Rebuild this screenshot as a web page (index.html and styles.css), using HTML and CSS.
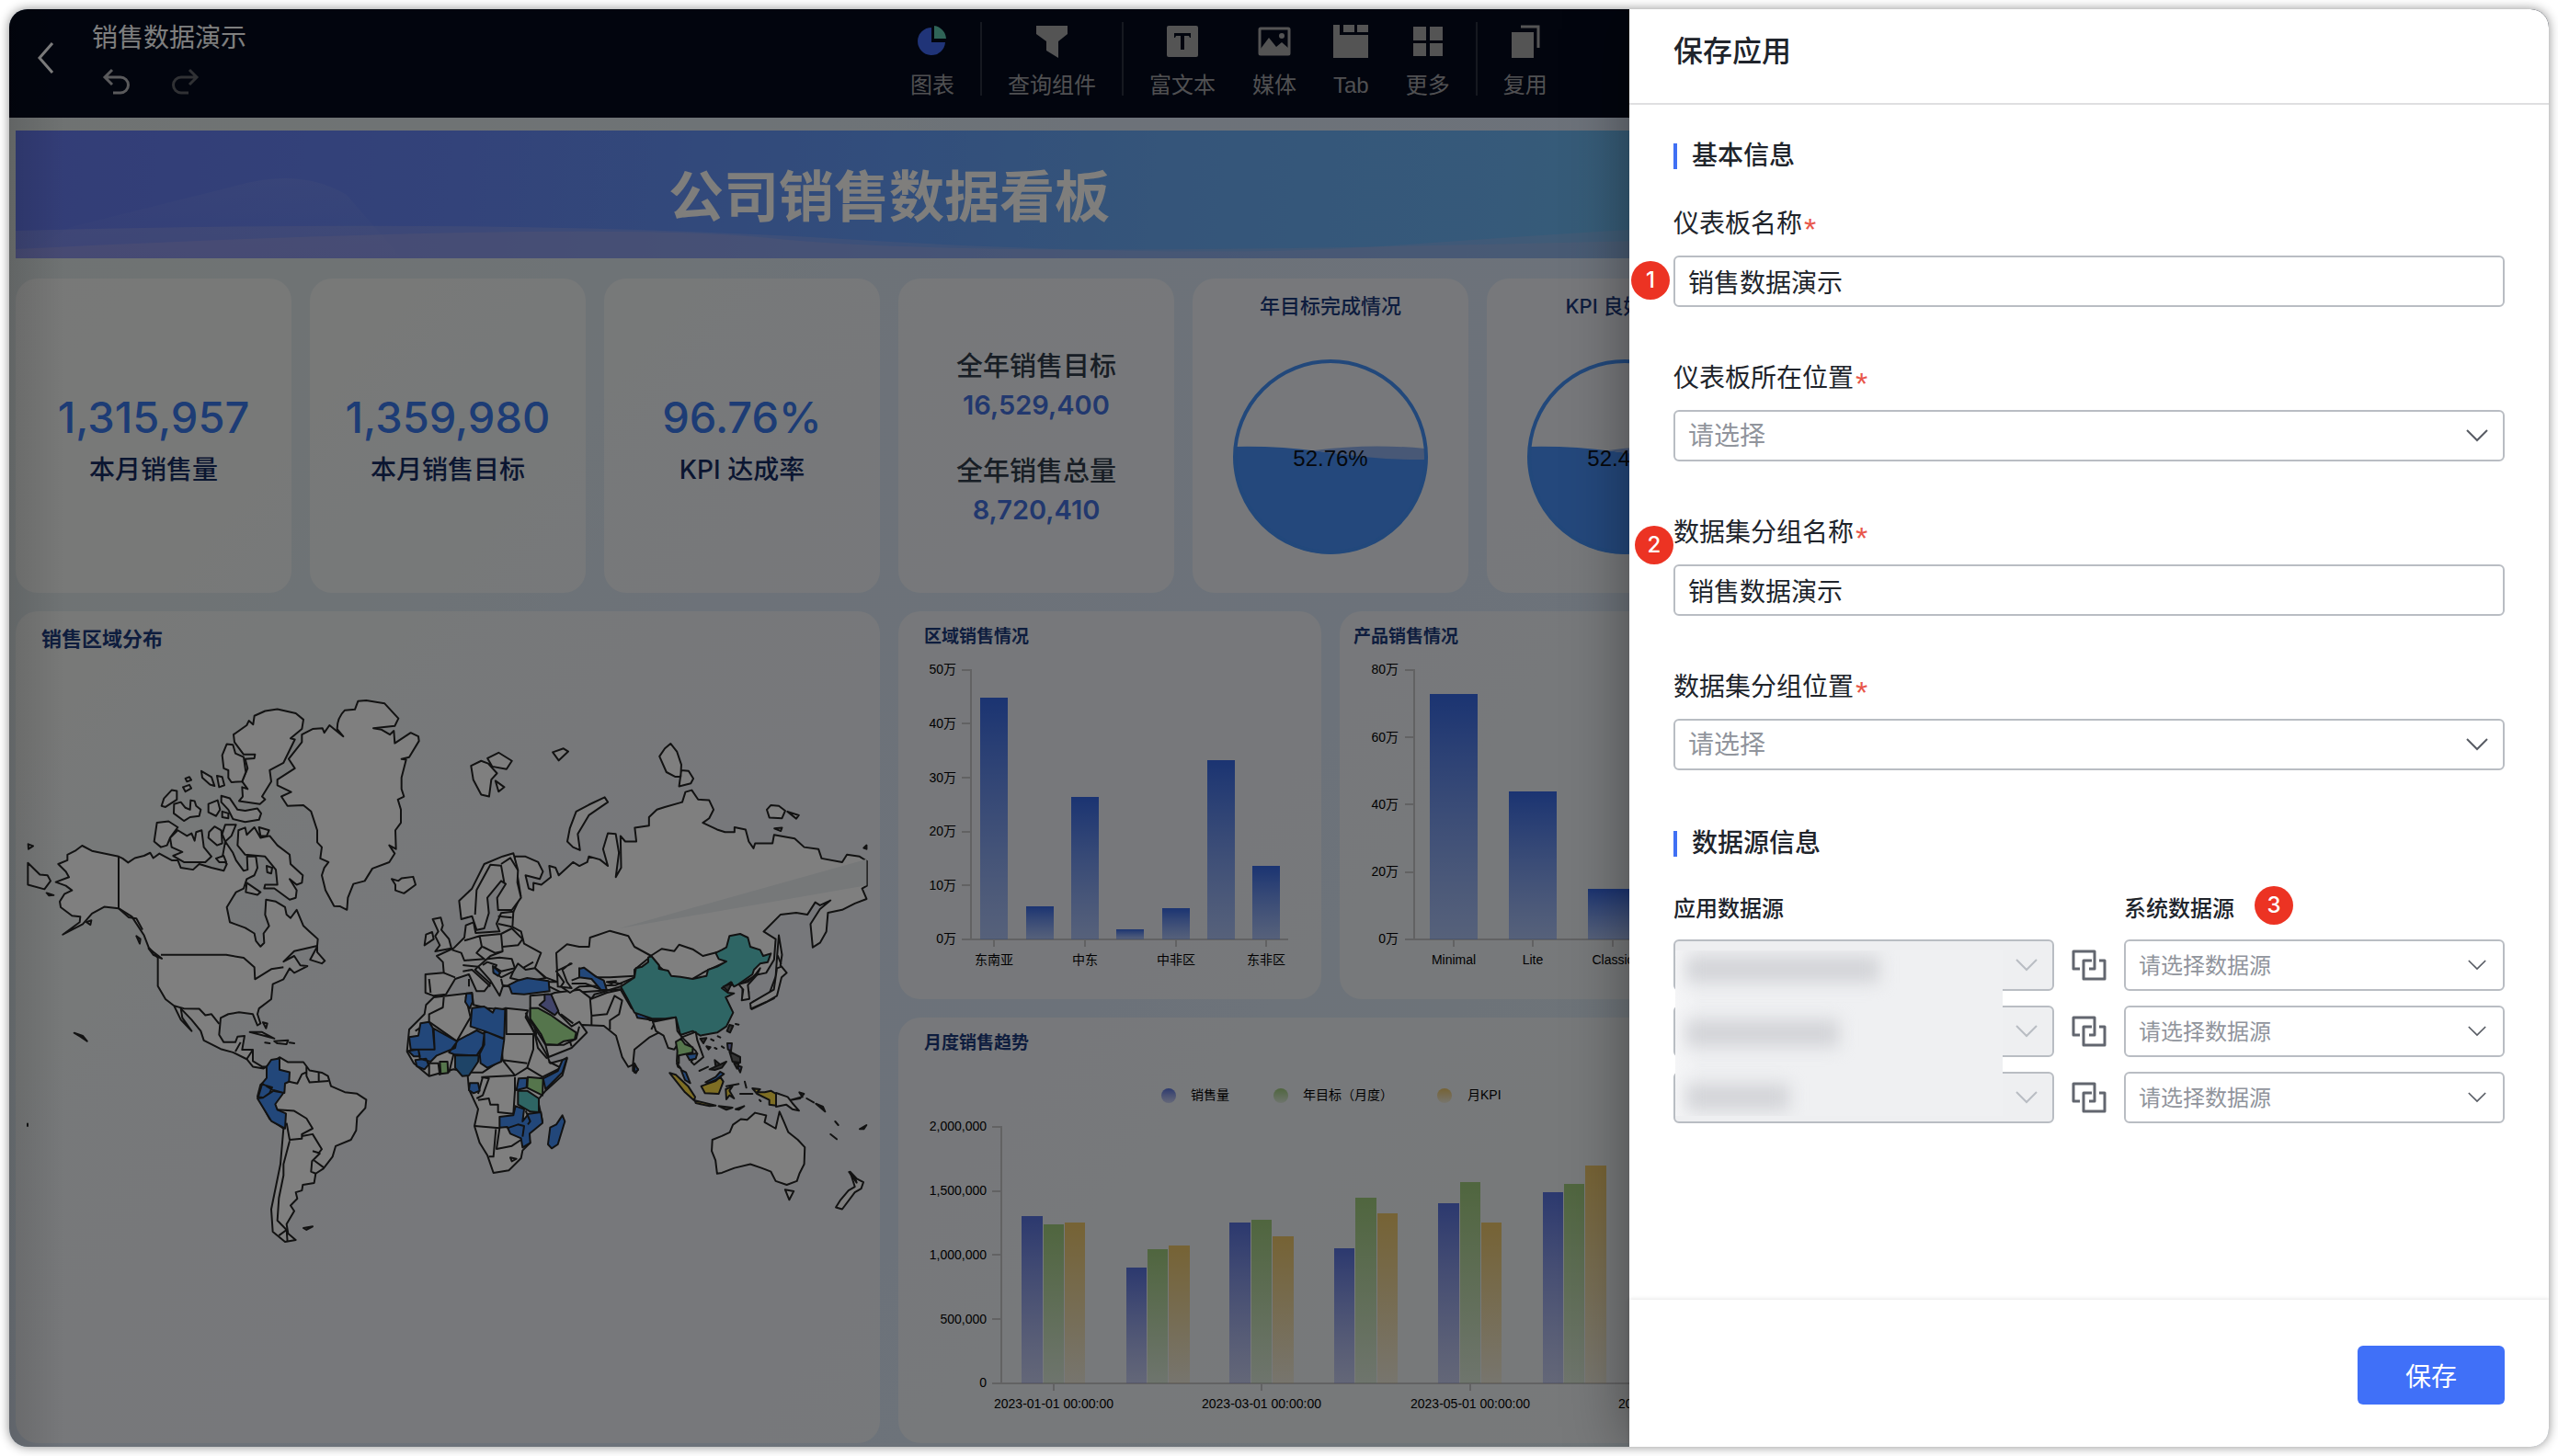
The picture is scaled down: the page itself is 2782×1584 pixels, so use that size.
FILE: index.html
```html
<!DOCTYPE html>
<html lang="zh-CN">
<head>
<meta charset="utf-8">
<meta name="viewport" content="width=device-width, initial-scale=1">
<title>销售数据演示</title>
<link rel="stylesheet" href="styles.css">
</head>
<body>
<div class="app">
  <header class="topbar">
    <div class="topbar-left">
      <button class="icon-btn" aria-label="返回"><svg width="20" height="36" viewBox="0 0 20 36"><path d="M17 2 3 18l14 16" fill="none" stroke="#fff" stroke-width="3"/></svg></button>
      <div class="doc">
        <h1 class="doc-title">销售数据演示</h1>
        <div class="history">
          <button class="icon-btn" aria-label="撤销"><svg width="32" height="30" viewBox="0 0 32 30"><path d="M11 2 3 10l8 8M4 10h16a8 8 0 0 1 0 17h-8" fill="none" stroke="#b4b4b8" stroke-width="3"/></svg></button>
          <button class="icon-btn" aria-label="重做"><svg width="32" height="30" viewBox="0 0 32 30"><path d="m21 2 8 8-8 8M28 10H12a8 8 0 0 0 0 17h8" fill="none" stroke="#606268" stroke-width="3"/></svg></button>
        </div>
      </div>
    </div>
    <nav class="tools">
      <button class="tool"><svg width="36" height="36" viewBox="0 0 36 36"><path d="M17 3a15 15 0 1 0 15 16H17z" fill="#4068f0"/><path d="M20 1a15 15 0 0 1 13 14H20z" fill="#5fc8ae"/></svg>图表</button>
      <span class="sep"></span>
      <button class="tool"><svg width="36" height="36" viewBox="0 0 36 36"><path d="M1 1h34v9l-10 8v18l-13-8V18L1 10z" fill="#a8a8a8"/></svg>查询组件</button>
      <span class="sep"></span>
      <div class="tool-group">
        <button class="tool"><svg width="36" height="36" viewBox="0 0 36 36"><rect x="1" y="1" width="34" height="34" rx="2" fill="#a8a8a8"/><path d="M9 9h18v5h-1l-1-2h-5v15h-4V12h-5l-1 2H9z" fill="#040b1d"/></svg>富文本</button>
        <button class="tool"><svg width="36" height="36" viewBox="0 0 36 36"><rect x="2" y="4" width="32" height="28" rx="1" fill="none" stroke="#a8a8a8" stroke-width="3"/><path d="M3 26 12 14l8 10 6-5 8 7v6H3z" fill="#a8a8a8"/><circle cx="26" cy="12" r="3" fill="#a8a8a8"/></svg>媒体</button>
        <button class="tool"><svg width="38" height="36" viewBox="0 0 38 36"><path d="M0 0h7v11h31v25H0zM11 0h12v8H11zM26 0h12v8H26z" fill="#a8a8a8"/></svg>Tab</button>
        <button class="tool"><svg width="36" height="36" viewBox="0 0 36 36"><path d="M2 2h14v15H2zM20 2h14v15H20zM2 20h14v14H2zM20 20h14v14H20z" fill="#a8a8a8"/></svg>更多</button>
      </div>
      <span class="sep"></span>
      <button class="tool"><svg width="36" height="36" viewBox="0 0 36 36"><path d="M3 8h24v28H3z" fill="#a8a8a8"/><path d="M13 2h19v23" fill="none" stroke="#a8a8a8" stroke-width="3"/></svg>复用</button>
    </nav>
  </header>

  <main class="board">
    <div class="banner">
      <svg class="banner-art" viewBox="0 0 1900 139" preserveAspectRatio="none" aria-hidden="true">
        <defs><linearGradient id="glow" x1="0" y1="0" x2="0" y2="1"><stop offset="0" stop-color="#b0b8f0" stop-opacity=".14"/><stop offset="1" stop-color="#b0b8f0" stop-opacity="0"/></linearGradient></defs>
        <path d="M60 105 240 60Q310 40 360 70L420 139H0z" fill="url(#glow)"/>
        <path d="M0 109Q520 95 900 118T1500 125T1900 100V139H0z" fill="#b8b4e4" opacity=".26"/>
        <path d="M0 129Q640 98 820 117T1500 126T1900 112V139H0z" fill="#c8b4d8" opacity=".24"/>
      </svg>
      <h2 class="banner-title">公司销售数据看板</h2>
    </div>

    <section class="kpis">
      <div class="card kpi"><strong>1,315,957</strong><span>本月销售量</span></div>
      <div class="card kpi"><strong>1,359,980</strong><span>本月销售目标</span></div>
      <div class="card kpi"><strong>96.76%</strong><span>KPI 达成率</span></div>
      <div class="card totals">
        <div class="total"><span>全年销售目标</span><strong>16,529,400</strong></div>
        <div class="total"><span>全年销售总量</span><strong>8,720,410</strong></div>
      </div>
      <div class="card gauge">
        <h3 class="card-title">年目标完成情况</h3>
        <svg width="216" height="216" viewBox="0 0 216 216">
          <path d="M4 97Q50 96 96 102T212 111A104 104 0 0 1 4 108z" fill="#4890f8"/>
          <path d="M90 101Q150 93 211 99V111Q160 112 90 101z" fill="#90b0ec"/>
          <circle cx="108" cy="108" r="104" fill="none" stroke="#4490f6" stroke-width="4"/>
          <text class="gauge-text" x="108" y="109">52.76%</text>
        </svg>
      </div>
      <div class="card gauge">
        <h3 class="card-title">KPI 良好情况</h3>
        <svg width="216" height="216" viewBox="0 0 216 216">
          <path d="M4 97Q50 96 96 102T212 111A104 104 0 0 1 4 108z" fill="#4890f8"/>
          <path d="M90 101Q150 93 211 99V111Q160 112 90 101z" fill="#90b0ec"/>
          <circle cx="108" cy="108" r="104" fill="none" stroke="#4490f6" stroke-width="4"/>
          <text class="gauge-text" x="108" y="109">52.43%</text>
        </svg>
      </div>
    </section>

    <section class="charts">
      <article class="card map-card">
        <h3 class="card-title">销售区域分布</h3>
        <svg class="chart map" viewBox="17 740 940 640" role="img" aria-label="销售区域分布">
          <!-- Americas, Greenland -->
          <g transform="translate(0 740) scale(.33333 .40816)">
            <path d="M190 490 220 480 220 465 245 455 268 441 300 455 387 470 400 475 418 486 440 474 470 468 490 460 500 474 520 462 560 480 580 480 590 500 630 505 650 490 690 500 730 508 740 490 725 475 735 430 760 460 770 480 795 508 808 505 806 470 835 470 840 500 830 520 805 530 795 555 770 565 740 605 750 645 800 660 830 675 835 695 850 710 862 700 860 675 878 655 865 625 868 585 900 590 930 605 935 625 948 634 968 612 990 655 1010 670 1037 690 1035 708 960 722 925 750 960 735 980 760 1003 762 960 780 945 768 925 797 890 810 885 850 845 875 840 890 850 915 840 920 825 890 780 885 745 890 720 900 715 945 730 965 768 965 775 950 798 948 790 985 825 985 825 1015 855 1030 870 1030 860 1035 825 1030 805 1010 760 992 720 983 665 960 655 935 625 905 590 875 595 900 625 935 590 905 568 868 540 850 515 815 515 740 485 712 470 680 430 630 387 608 340 604 300 622 270 650 205 678 260 645 262 630 235 628 198 605 195 590 210 570 235 560 215 548 182 538 225 525 215 510z"/>
            <path class="line" d="M387 470V608L420 632 445 635 465 665M525 732H738L795 740 830 765 832 797 885 770 925 765M568 868 600 875 650 876 670 893 690 890 715 916M768 990 785 965M805 1010 825 985"/>
            <path d="M1100 130Q1100 100 1125 80L1158 78 1168 56 1195 54 1255 62 1300 102 1288 122 1218 128 1245 132 1272 145 1285 135 1288 168 1340 140 1365 150 1367 162 1335 205 1310 210 1325 212 1310 260V290L1318 310 1298 318 1308 345 1308 380 1290 400 1292 450 1270 440 1288 462 1270 485 1215 502 1190 535 1153 543 1135 580 1132 612 1110 603 1090 602 1062 560 1050 520 1058 500 1072 485 1045 475 1050 445 1035 432 1035 400 1015 350 990 333 938 335 918 310 950 298 905 280 905 265 962 235 942 210 985 165 985 145 1020 130 1052 128 1058 140 1075 120 1120 150z"/>
            <path d="M830 95 865 82 905 77 965 88 990 105 985 130 948 155 962 158 925 220 880 240 885 270 855 310 865 318 848 330 780 322 792 310 790 285 808 290 790 270 808 235 800 210 830 208 832 198 795 198 765 165 762 145 805 120 812 108 826 118z"/>
            <path d="M740 170 760 172 768 195 795 205 802 245 790 270 755 272 745 260 745 240 730 235 725 200zM657 242 690 258 700 282 685 278 660 260zM708 255 725 258 732 280 715 285zM605 262 618 258 624 266 610 270zM597 285 618 279 624 288 605 297zM560 293 577 295 577 318 540 338 527 335 535 315zM568 330 590 325 605 340 620 345 622 320 635 322 640 335 655 345 650 362 620 365 600 375 567 355zM680 330 710 320 718 345 705 362 680 352zM722 308 750 315 775 345 800 348 840 342 852 355 845 372 800 378 760 370 745 345 722 325zM725 350 745 355 745 368 725 365zM512 380 550 376 580 392 555 420 545 440 525 445 503 430zM555 420 580 400 610 415 625 408 635 428 640 405 658 400 665 445 690 470 670 485 600 485 565 468 595 458 560 445zM682 405 700 390 722 400 725 435 708 440 680 420zM735 385 770 385 755 415 735 430 725 410zM778 400 800 393 805 412 830 392 850 420 880 415 905 440 945 465 948 490 988 520 985 540 968 545 945 530 968 560 965 580 945 585 895 555 862 555 865 545 905 545 900 505 865 470 800 465 775 440zM845 392 878 400 870 415 850 415zM805 540 850 565 840 572 802 565zM870 495 888 500 885 515 872 512zM705 475 730 468 738 485 715 485z"/>
            <path d="M1278 530 1300 535 1310 528 1348 524 1356 545 1318 568 1290 560 1290 545zM1012 745 1035 710 1035 725 1060 748 1050 755zM92 437 108 442 93 450zM91 487 130 518 155 520 165 535 145 557 91 545zM152 567 175 573 160 574zM282 645 298 640 295 652zM445 682 458 690 456 702zM485 715 528 742 500 732zM90 1182v6zM815 938 855 938 895 955 850 945zM895 962 940 960 935 970 905 968zM865 966 880 968zM945 966 960 968zM242 940 270 948 284 962 262 950zM858 912 872 915 868 928zM990 1460 1020 1456 1000 1465z"/>
            <path d="M870 1030 912 1005 940 1018 990 1018 1010 1040 1050 1046 1070 1055 1080 1082 1125 1098 1165 1102 1195 1118 1192 1140 1165 1165 1162 1200 1145 1225 1095 1242 1085 1270 1055 1302 1030 1315 1025 1340 988 1345 985 1360 965 1365 970 1382 948 1400 960 1415 935 1450 940 1475 965 1492 930 1497 890 1470 885 1410 900 1350 915 1290 925 1195 880 1170 840 1110 850 1078 870 1065z"/>
            <path class="blue" d="M870 1030 885 1012 912 1008 912 1038 945 1045 943 1070 930 1075 928 1100 895 1095 855 1075 870 1060zM855 1077 888 1085 880 1100 858 1113 843 1110zM858 1113 895 1093 925 1100 898 1130 905 1145 933 1155 930 1195 885 1175 840 1115z"/>
            <path class="line" d="M943 1070 970 1075 985 1050 1000 1045M1000 1030 1000 1055 1010 1072 1072 1068M1040 1046V1070M905 1145 960 1148 1000 1168 1020 1195 985 1210 985 1222 945 1225 935 1180M985 1215 1020 1210 1050 1250 1040 1260 1020 1255M1045 1260 1018 1282 1015 1310 1030 1315M1025 1280 1058 1300M945 1228 925 1290 925 1320 910 1380 905 1440 935 1465M910 1480 935 1465 938 1497"/>
          </g>
          <!-- Northern Asia, Australia and the northern islands -->
          <g transform="translate(420 740) scale(.34439 .40816)">
            <path d="M268 228 300 215 322 222 350 248 332 265 325 310 300 305 275 265zM320 208 355 193 397 215 380 237 335 230zM345 268 373 285 355 297zM526 192 560 182 575 190 545 214zM863 203 880 182 898 169 918 190 932 225 930 257 912 257 885 245zM932 240 955 242 970 262 962 275 925 283zM572 430 580 395 600 350 640 332 690 312 700 325 640 360 605 410 612 453 590 445zM1202 345 1215 333 1240 335 1260 348 1250 368 1210 366zM1267 350 1303 360 1295 369zM1226 395 1250 393 1246 402zM1508 447 1517 440 1517 450z"/>
            <path d="M395 630 425 575 405 470 440 470 480 485 495 510 485 530 440 520 450 555 465 560 465 540 490 545 520 525 515 495 535 500 545 520 590 485 610 495 635 485 640 470 675 478 700 495 685 450 700 408 725 410 735 460 725 525 742 500 740 415 755 430 790 430 785 393 830 388 830 365 855 345 880 338 935 325 945 298 965 293 985 318 1020 320 1034 345 1020 368 1000 380 1045 398 1070 405 1100 405 1100 392 1135 398 1145 430 1160 448 1165 435 1220 435 1225 412 1290 422 1320 445 1365 450 1375 475 1440 485 1455 465 1495 470 1518 482V548L1503 555 1517 583 1480 595 1440 612 1395 620 1390 670 1370 700 1347 712 1340 650 1370 610 1403 587 1370 600 1355 592 1330 625 1295 620 1245 625 1192 670 1230 690 1225 745 1200 780 1170 785 1120 810 1010 820 800 820 560 835 450 790 400 700z"/>
            <path class="sea-cut" d="M733 662 1517 477V547z"/>
            <path d="M835 735 870 716 910 722 925 705 970 718 1000 735 1045 725 1075 750 1010 775 965 797 900 790 865 765z"/>
            <path d="M1240 680 1250 732 1245 760 1262 780 1240 795 1225 848 1155 877 1158 857 1210 835 1230 790 1235 730zM1125 825 1145 830 1143 850 1125 848z"/>
            <path d="M1030 1225 1060 1215 1085 1205 1095 1185 1120 1170 1140 1172 1165 1153 1200 1160 1195 1178 1230 1195 1242 1150 1255 1175 1270 1205 1300 1225 1322 1245 1320 1290 1305 1315 1297 1335 1265 1345 1230 1335 1215 1310 1185 1300 1150 1290 1100 1300 1060 1313 1045 1315 1040 1280 1028 1255zM1260 1358 1287 1362 1273 1385zM1465 1310 1485 1328 1507 1338 1500 1355 1480 1365 1440 1410 1420 1405 1435 1385 1460 1360 1480 1350z"/>
          </g>
          <!-- Europe, Africa, Middle East, Central and South Asia -->
          <g transform="translate(430 940) scale(.33333)">
            <path d="M290 0 250 80 208 120 215 180 250 170 265 215 290 210 305 160 300 110 345 55 360 65 332 110 335 150 380 150 410 110 398 60 400 20 385-35 350-25z"/>
            <path class="line" d="M260 165 265 85 310 2 345 5 355 60M400 20 375-20 345 0"/>
            <path d="M122 180 148 175 155 200 150 215 175 245 183 275 130 285 145 265 130 235 140 220zM100 230 120 222 125 245 95 265z"/>
            <path d="M230 200 255 190 262 225 340 220 330 195 345 160 385 155 382 205 410 220 420 260 475 290 455 340 490 370 530 385 500 385 440 380 375 395 350 400 340 430 310 380 270 335 260 345 310 390 290 415 265 415 240 360 195 375 165 425 125 430 98 420 98 360 158 355 155 320 135 300 190 275 225 240z"/>
            <path class="line" d="M225 250 275 235 282 270 265 290 290 310 225 315 215 290 185 280M275 235 345 228 350 285 325 290 285 270M345 228 380 210 415 245 400 265 350 270M350 285 310 300 270 335 220 330M300 310 340 305 380 310 390 340 345 350 320 335M285 330 300 320 330 330 320 350 345 370 385 350M220 350 250 345 310 400M158 355 195 370M110 375 115 420M345 375 350 395 370 400M335 170 380 175M335 195 380 205M415 340 450 320M240 400 240 375"/>
            <path class="sea" d="M385 350 400 325 425 345 455 340 490 372 440 382 400 378 375 372z"/>
            <path d="M125 435 250 420 255 460 300 470 345 475 360 470 432 478 425 500 495 625 505 650 560 635 545 690 490 740 465 770 480 840 435 880 440 910 415 935 410 960 370 1000 320 1008 300 950 275 910 258 855 270 800 240 735 235 680 190 670 110 692 60 650 38 612 45 540 95 490 100 460z"/>
            <path class="line" d="M158 435 155 468 110 490 110 515 65 545M250 420 230 435 245 500 200 578 110 515M362 470V555H460L440 478M425 485 455 555 465 600 495 635M450 555 450 605 430 665 480 695 540 665 500 645M345 555 350 640 430 650M345 640 285 680 235 680M350 640 390 690 285 695 270 750M430 665 390 690M280 695 305 700 285 755 265 765M270 770 305 765 310 785 335 785 335 810 385 815M385 815 390 740 390 695M260 855 340 862 330 930 380 920 410 900M328 865 320 955 305 955M375 958 395 962 380 970zM110 690 110 650 140 650 145 690M190 620 175 680"/>
            <path d="M520 420 600 410 640 440 690 420 735 410 770 470 830 510 860 510 870 545 830 565 780 605 775 655 760 662 740 630 720 560 695 540 680 528 610 525 570 530 535 490 495 430z"/>
            <path class="line" d="M635 435 640 495 690 490 715 430 740 445 730 490 700 510 700 540M640 495V525M835 540 845 520 870 525 865 550"/>
            <path d="M525 290 560 262 600 270 632 270 635 240 700 218 760 235 780 270 835 300 780 345 780 370 720 395 600 400 570 420 540 400 550 385 525 350 575 325 570 325 545 345 560 385 575 405 530 400z"/>
            <path class="line" d="M575 380 600 370 600 340 660 370 700 370 780 365M575 390 620 390 685 415 735 400M705 385 740 392M640 440 650 425 690 415"/>
            <path d="M440 430 500 425 535 490 575 530 600 515 625 550 575 600 500 630 490 590 440 510z"/>
            <path class="line" d="M490 590 550 590 590 570 600 530M575 595 570 580M540 490 580 520"/>
            <path class="green" d="M440 470 465 470 510 495 545 520 590 550 585 572 550 578 530 590 490 588 475 555 440 505zM145 645 170 645 172 682 148 685zM432 695 482 700 480 755 430 730z"/>
            <path class="violet" d="M487 425 508 425 532 480 520 493 470 460 487 445z"/>
            <path class="blue" d="M370 395 400 380 430 372 500 382 503 415 420 425 380 422zM232 422 250 422 252 450 242 472 228 450zM250 470 290 465 318 485 325 470 358 475 355 570 290 545 245 530zM82 520 110 515 125 540 128 605 50 605 45 565 75 560zM122 535 200 578 195 600 135 625 115 645 80 635 75 605 128 605zM205 575 265 543 290 555 285 595 265 625 195 622 175 615zM290 545 355 572 345 645 300 665 278 650 275 620 290 590zM42 610 75 605 80 628 60 628zM65 640 100 635 108 655 95 670 70 660zM243 715 270 715 275 740 255 748 240 738zM402 700 430 698 428 730 395 738zM560 632 545 680 490 735 482 700 530 675 545 640zM340 825 385 820 392 790 420 800 415 840 435 815 475 810 480 845 438 880 440 910 415 925 410 895 375 880 365 858 340 860zM545 820 553 840 530 915 510 928 498 915 505 860 525 850zM600 342 615 338 655 368 680 380 690 412 670 410 640 375 600 370zM690 385 720 382 705 390zM783 485 800 490 845 510 790 502zM845 510 868 510 850 515zM775 655 792 670 785 682 775 675zM318 333 342 355 335 365 320 355z"/>
            <path class="deep" d="M195 625 272 625 270 645 240 690 218 692 195 665z"/>
            <path class="teal" d="M400 740 430 740 468 765 468 810 440 808 400 785z"/>
            <path class="line" d="M365 862 400 850 420 855 415 890M425 805 440 840 432 850"/>
          </g>
          <!-- China, South-East Asia, Pacific -->
          <g transform="translate(690 1040) scale(.33333)">
            <path class="teal" d="M-45 100 0 70 5 40 25 35 45 20 45 5 55 0 80 30 80 42 110 48 120 65 150 68 190 75 235 65 240 45 270 35 300 18 275 10 265-10 285-20 300-28 310-65 345-72 370-60 378-30 410-20 420 0 445-8 435 20 410 25 390 45 385 60 340 92 325 100 315 85 285 105 305 120 325 122 298 135 322 185 300 230 270 250 215 260 190 245 150 258 135 200 100 205 60 205 0 185-20 145z"/>
            <path d="M340 92 370 85 395 60 410 40 400 62 370 95 375 140 350 145 355 110zM465 40 480 35 497 55 480 70 465 130 430 150 380 172 378 155 420 130 455 110zM60 215 135 200 140 245 155 265 130 305 110 300 95 260 70 245zM155 265 200 248 205 275 225 330 195 355 185 345 205 320 200 310z"/>
            <path class="green" d="M135 280 152 270 165 288 190 298 190 315 145 325 145 350 138 345 140 310zM138 350 152 368 142 362z"/>
            <path class="blue" d="M170 322 205 318 200 335 180 340zM152 372 168 380 182 415 165 405zM232 412 265 395 280 378 292 385 265 405 240 415zM0 350 12 372 0 380z"/>
            <path class="gold" d="M115 382 135 388 175 425 198 460 195 472 165 445zM197 472 265 488 245 490 200 480zM218 425 245 415 265 408 280 395 290 410 275 450 230 448zM298 435 320 425 310 440 325 465 310 455 300 468zM385 432 410 435 400 445 425 445 445 440 462 450 462 488 440 485 440 470 400 450z"/>
            <path d="M462 447 500 460 515 480 537 505 515 500 495 485 462 492z"/>
            <path class="violet" d="M303 285 318 285 315 310 305 305zM335 358 350 362 345 380z"/>
            <path class="isle" d="M310 225 322 228 312 250 302 245zM215 270 235 268 225 285zM235 295 248 298 242 305zM250 272 258 276zM272 262 280 266zM262 300 268 303zM285 295 292 300zM310 312 345 330 345 348 320 345zM325 350 340 352 335 368zM212 375 240 362zM245 370 300 345 285 365 262 372zM262 340 280 355 265 360zM275 490 320 495 300 502zM330 500 358 490 340 502zM345 450 385 450zM300 425 340 418zM360 410 365 430zM510 470 540 465 553 450 538 445 548 460zM562 465 585 478zM592 482 615 492 622 508zM655 540 665 552zM640 582 660 598zM735 565 757 552 748 565zM700 705 720 725 725 740zM468 0 478 25zM408 470 412 474zM330 222 340 224zM290 100 318 88 305 115z"/>
          </g>
        </svg>
      </article>

      <article class="card bar-card">
        <h3 class="card-title">区域销售情况</h3>
        <svg class="chart" viewBox="977 710 460 350" role="img" aria-label="区域销售情况">
          <defs>
            <linearGradient id="bar" x1="0" y1="0" x2="0" y2="1"><stop offset="0" stop-color="#3668e4"/><stop offset="1" stop-color="#6c94f4" stop-opacity=".5"/></linearGradient>
            <linearGradient id="b" x1="0" y1="0" x2="0" y2="1"><stop offset="0" stop-color="#5872de"/><stop offset="1" stop-color="#8c98e8" stop-opacity=".4"/></linearGradient>
            <linearGradient id="g" x1="0" y1="0" x2="0" y2="1"><stop offset="0" stop-color="#a0cc7e"/><stop offset="1" stop-color="#a0cc7e" stop-opacity=".22"/></linearGradient>
            <linearGradient id="y" x1="0" y1="0" x2="0" y2="1"><stop offset="0" stop-color="#ecc66a"/><stop offset="1" stop-color="#ecc66a" stop-opacity=".18"/></linearGradient>
          </defs>
          <path class="axis" d="M1046 729H1056V1022H1401M1046 787h10M1046 846h10M1046 905h10M1046 963h10M1046 1022h10M1081 1022v8M1180 1022v8M1279 1022v8M1377 1022v8"/>
          <g fill="url(#bar)"><path d="M1066 759h30v263h-30z"/><path d="M1116 986h30v36h-30z"/><path d="M1165 867h30v155h-30z"/><path d="M1214 1011h30v11h-30z"/><path d="M1264 988h30v34h-30z"/><path d="M1313 827h30v195h-30z"/><path d="M1362 942h30v80h-30z"/></g>
          <g class="y-labels"><text x="1040" y="728">50万</text><text x="1040" y="787">40万</text><text x="1040" y="846">30万</text><text x="1040" y="904">20万</text><text x="1040" y="963">10万</text><text x="1040" y="1021">0万</text></g>
          <g class="x-labels"><text x="1081" y="1044">东南亚</text><text x="1180" y="1044">中东</text><text x="1279" y="1044">中非区</text><text x="1377" y="1044">东非区</text></g>
        </svg>
      </article>

      <article class="card bar-card product">
        <h3 class="card-title">产品销售情况</h3>
        <svg class="chart" viewBox="1457 710 460 350" role="img" aria-label="产品销售情况">
          <path class="axis" d="M1528 729H1538V1022H1880M1528 802h10M1528 875h10M1528 949h10M1528 1022h10M1581 1022v8M1667 1022v8M1754 1022v8"/>
          <g fill="url(#bar)"><path d="M1555 755h52v267h-52z"/><path d="M1641 861h52v161h-52z"/><path d="M1727 967h52v55h-52z"/></g>
          <g class="y-labels"><text x="1521" y="728">80万</text><text x="1521" y="802">60万</text><text x="1521" y="875">40万</text><text x="1521" y="948">20万</text><text x="1521" y="1021">0万</text></g>
          <g class="x-labels"><text x="1581" y="1044">Minimal</text><text x="1667" y="1044">Lite</text><text x="1754" y="1044">Classic</text></g>
        </svg>
      </article>

      <article class="card trend-card">
        <h3 class="card-title">月度销售趋势</h3>
        <svg class="chart" viewBox="977 1160 940 400" role="img" aria-label="月度销售趋势">
          <circle cx="1271" cy="1192" r="8" fill="url(#b)"/><circle cx="1393" cy="1192" r="8" fill="url(#g)"/><circle cx="1571" cy="1192" r="8" fill="url(#y)"/>
          <g class="legend"><text x="1295" y="1191">销售量</text><text x="1417" y="1191">年目标（月度）</text><text x="1596" y="1191">月KPI</text></g>
          <path class="axis" d="M1079 1226H1089V1505H1880M1079 1296h10M1079 1365h10M1079 1435h10M1079 1505h10M1146 1505v8M1372 1505v8M1599 1505v8"/>
          <g fill="url(#b)"><path d="M1111 1323h23v182h-23z"/><path d="M1225 1379h22v126h-22z"/><path d="M1337 1330h23v175h-23z"/><path d="M1451 1358h22v147h-22z"/><path d="M1564 1309h23v196h-23z"/><path d="M1678 1297h22v208h-22z"/></g>
          <g fill="url(#g)"><path d="M1135 1332h22v173h-22z"/><path d="M1248 1359h22v146h-22z"/><path d="M1361 1327h22v178h-22z"/><path d="M1474 1303h23v202h-23z"/><path d="M1588 1286h22v219h-22z"/><path d="M1701 1288h22v217h-22z"/></g>
          <g fill="url(#y)"><path d="M1158 1330h22v175h-22z"/><path d="M1271 1355h23v150h-23z"/><path d="M1384 1345h23v160h-23z"/><path d="M1498 1320h22v185h-22z"/><path d="M1611 1330h22v175h-22z"/><path d="M1724 1268h23v237h-23z"/></g>
          <g class="y-labels"><text x="1073" y="1225">2,000,000</text><text x="1073" y="1295">1,500,000</text><text x="1073" y="1365">1,000,000</text><text x="1073" y="1435">500,000</text><text x="1073" y="1504">0</text></g>
          <g class="x-labels"><text x="1146" y="1527">2023-01-01 00:00:00</text><text x="1372" y="1527">2023-03-01 00:00:00</text><text x="1599" y="1527">2023-05-01 00:00:00</text><text x="1825" y="1527">2023-07-01 00:00:00</text></g>
        </svg>
      </article>
    </section>
  </main>

  <div class="mask"></div>

  <form class="drawer">
    <header class="drawer-head"><h2>保存应用</h2></header>
    <div class="drawer-body">
      <h3 class="section">基本信息</h3>
      <div class="field">
        <label for="board-name">仪表板名称<i>*</i></label>
        <div class="control"><input id="board-name" type="text" value="销售数据演示"><span class="badge badge-side">1</span></div>
      </div>
      <div class="field">
        <label for="board-place">仪表板所在位置<i>*</i></label>
        <div class="control"><select id="board-place"><option>请选择</option></select><svg class="chevron" width="24" height="14" viewBox="0 0 24 14"><path d="m1 1 11 11L23 1"/></svg></div>
      </div>
      <div class="field">
        <label for="set-name">数据集分组名称<i>*</i><span class="badge badge-label">2</span></label>
        <div class="control"><input id="set-name" type="text" value="销售数据演示"></div>
      </div>
      <div class="field">
        <label for="set-place">数据集分组位置<i>*</i></label>
        <div class="control"><select id="set-place"><option>请选择</option></select><svg class="chevron" width="24" height="14" viewBox="0 0 24 14"><path d="m1 1 11 11L23 1"/></svg></div>
      </div>

      <h3 class="section section-source">数据源信息</h3>
      <div class="sources">
        <span class="col-head">应用数据源</span><span></span><span class="col-head">系统数据源<span class="badge badge-head">3</span></span>

        <div class="control small"><select disabled aria-label="应用数据源 1"></select><svg class="chevron" width="24" height="14" viewBox="0 0 24 14"><path d="m1 1 11 11L23 1"/></svg></div>
        <svg class="link" width="38" height="34" viewBox="0 0 38 34"><path d="M9 21H2V2h23v19h-6M22 12h-9v20h23V12h-6" fill="none" stroke="#62666f" stroke-width="3" stroke-linejoin="round"/></svg>
        <div class="control small"><select aria-label="系统数据源 1"><option>请选择数据源</option></select><svg class="chevron" width="20" height="12" viewBox="0 0 24 14"><path d="m1 1 11 11L23 1"/></svg></div>

        <div class="control small"><select disabled aria-label="应用数据源 2"></select><svg class="chevron" width="24" height="14" viewBox="0 0 24 14"><path d="m1 1 11 11L23 1"/></svg></div>
        <svg class="link" width="38" height="34" viewBox="0 0 38 34"><path d="M9 21H2V2h23v19h-6M22 12h-9v20h23V12h-6" fill="none" stroke="#62666f" stroke-width="3" stroke-linejoin="round"/></svg>
        <div class="control small"><select aria-label="系统数据源 2"><option>请选择数据源</option></select><svg class="chevron" width="20" height="12" viewBox="0 0 24 14"><path d="m1 1 11 11L23 1"/></svg></div>

        <div class="control small"><select disabled aria-label="应用数据源 3"></select><svg class="chevron" width="24" height="14" viewBox="0 0 24 14"><path d="m1 1 11 11L23 1"/></svg></div>
        <svg class="link" width="38" height="34" viewBox="0 0 38 34"><path d="M9 21H2V2h23v19h-6M22 12h-9v20h23V12h-6" fill="none" stroke="#62666f" stroke-width="3" stroke-linejoin="round"/></svg>
        <div class="control small"><select aria-label="系统数据源 3"><option>请选择数据源</option></select><svg class="chevron" width="20" height="12" viewBox="0 0 24 14"><path d="m1 1 11 11L23 1"/></svg></div>

        <div class="redaction" aria-hidden="true"><span class="smear long"></span><span class="smear mid"></span><span class="smear short"></span></div>
      </div>
    </div>
    <footer class="drawer-foot"><button class="save" type="button">保存</button></footer>
  </form>
</div>
</body>
</html>
```
FILE: styles.css
```css
* { box-sizing: border-box; }
body {
  margin: 0;
  padding: 10px;
  background: #fff;
  font-family: "Liberation Sans", "Noto Sans CJK SC", sans-serif;
  color: #20242b;
}
h1, h2, h3 { margin: 0; font-weight: 500; }
button { border: 0; padding: 0; background: none; font: inherit; color: inherit; }
svg { display: block; }

.app {
  position: relative;
  display: flex;
  flex-direction: column;
  min-height: calc(100vh - 20px);
  border-radius: 20px;
  overflow: hidden;
  background: #dae8fa;
}
body::before {
  content: "";
  position: absolute;
  inset: 10px;
  border-radius: 20px;
  box-shadow: 0 0 12px rgba(0, 0, 0, .45);
}

/* top bar */
.topbar {
  display: grid;
  grid-template-columns: 980px auto;
  align-items: start;
  height: 118px;
  background: #040b1d;
  color: #a0a0a4;
}
.topbar-left { display: flex; align-items: center; gap: 40px; padding: 12px 0 0 30px; }
.doc-title { font-size: 28px; line-height: 40px; font-weight: 400; color: #fff; }
.history { display: flex; gap: 42px; padding: 12px 0 0 11px; }
.tools { display: flex; gap: 28px; padding-top: 14px; }
.tool-group { display: flex; gap: 40px; }
.tool {
  display: flex;
  flex-direction: column;
  align-items: center;
  gap: 14px;
  padding-top: 3px;
  font-size: 24px;
  line-height: 32px;
}
.sep { width: 2px; height: 80px; background: #2c3240; }

/* board */
.board {
  flex: 1;
  padding: 14px 855px 4px 7px;
  background: linear-gradient(130deg, #dfe5e4 0%, #dee7ea 15%, #dae5f2 30%, #d9e5f5 50%, #deeaf0 75%, #dce6f2 100%);
}
.banner {
  display: grid;
  place-items: center;
  height: 139px;
  margin-bottom: 22px;
  background: linear-gradient(96deg, #667aee 0%, #6686f4 25%, #649cf8 50%, #6aaaf4 65%, #6cb4f4 85%, #70c0e8 100%);
}
.banner-art { grid-area: 1 / 1; width: 100%; height: 100%; }
.banner-title { grid-area: 1 / 1; padding-top: 8px; font-size: 60px; line-height: 80px; font-weight: 700; color: #fffdf8; }
.card { border-radius: 24px; background: rgba(255, 252, 248, .54); }
.kpis { display: grid; grid-template-columns: repeat(6, 1fr); gap: 20px; margin-bottom: 20px; }
.kpis .card { height: 342px; display: flex; flex-direction: column; align-items: center; }
.kpi { justify-content: center; gap: 9px; padding-top: 8px; }
.kpi strong {
  font: 500 47px/56px Inter, "Liberation Sans", sans-serif;
  color: #3a78ea;
}
.kpi span { font-size: 28px; line-height: 40px; font-weight: 500; color: #162c62; font-family: Inter, "Noto Sans CJK SC", sans-serif; }
.totals { justify-content: center; gap: 32px; padding-top: 6px; }
.total { display: flex; flex-direction: column; align-items: center; gap: 2px; font-size: 29px; line-height: 40px; }
.total span { font-weight: 500; color: #303c4a; }
.total strong { font-family: Inter, "Liberation Sans", sans-serif; font-weight: 600; color: #4470dc; }
.card-title { font-size: 22px; line-height: 30px; font-weight: 500; color: #1c3a7c; font-family: Inter, "Noto Sans CJK SC", sans-serif; }
.gauge { padding-top: 15px; gap: 41px; }
.gauge-text { font-size: 24px; text-anchor: middle; dominant-baseline: central; fill: #0c1018; }

.charts { display: grid; grid-template-columns: 940fr 460fr 460fr; grid-template-rows: 422px 463px; gap: 20px; }
.charts .card-title { font-weight: 700; }
.map-card { grid-row: span 2; padding-top: 15px; }
.map-card .card-title { padding-left: 28px; }
.trend-card { grid-column: 2 / 4; }
.bar-card, .trend-card { padding-top: 13px; }
.bar-card .card-title, .trend-card .card-title { padding-left: 28px; font-size: 19px; }
.product .card-title { padding-left: 15px; }
.chart { width: 100%; height: auto; }
.bar-card .chart { margin-top: 2px; }
.trend-card .chart { margin-top: 10px; }
.map-card .chart { margin-top: 30px; }

.chart text { font-size: 14px; dominant-baseline: central; fill: #000; }
.y-labels text { text-anchor: end; }
.x-labels text { text-anchor: middle; }
.axis { fill: none; stroke: #c4c4c6; stroke-width: 2; }

.map path { fill: #fff; stroke: #242424; stroke-width: 2px; stroke-linejoin: round; vector-effect: non-scaling-stroke; }
.map .line { fill: none; }
.map .sea { fill: #edf1f3; }
.map .sea-cut { fill: #edf1f3; stroke: none; }
.map .blue { fill: #448ff5; }
.map .deep { fill: #3c88ce; }
.map .teal { fill: #5ccac9; }
.map .green { fill: #aaea98; }
.map .violet { fill: #8288d4; }
.map .gold { fill: #fcdc48; }
.map .isle { fill: #666; }

/* overlay */
.mask {
  position: absolute;
  inset: 0;
  background: linear-gradient(90deg, rgba(0, 0, 0, .12), transparent 60px), rgba(0, 0, 0, .5);
}
.drawer {
  position: absolute;
  inset: 0 0 0 auto;
  width: 1000px;
  display: flex;
  flex-direction: column;
  background: #fff;
  box-shadow: 0 0 64px rgba(0, 0, 0, .4);
}
.drawer-head { padding: 24px 48px 34px; border-bottom: 2px solid #dfdfe1; }
.drawer-head h2 { font-size: 32px; line-height: 44px; }
.drawer-body { flex: 1; padding: 36px 48px; }
.section { display: flex; align-items: center; gap: 16px; margin-bottom: 34px; font-size: 28px; line-height: 40px; font-weight: 500; }
.section::before { content: ""; width: 4px; height: 28px; background: #4070f4; }
.section-source { margin-top: 60px; }
.field { margin-bottom: 58px; }
.field label { position: relative; display: block; margin-bottom: 14px; font-size: 28px; line-height: 40px; }
.field i { margin-left: 2px; font-size: 34px; font-style: normal; line-height: 1; vertical-align: -8px; color: #e8564a; }
.field label { height: 40px; }
.control { position: relative; display: grid; align-items: center; }
.control input, .control select {
  grid-area: 1 / 1;
  width: 100%;
  height: 56px;
  padding: 0 14px;
  border: 2px solid #b9bdc3;
  border-radius: 6px;
  background: #fff;
  appearance: none;
  font: inherit;
  font-size: 28px;
  color: #20242b;
}
.control select { color: #90949c; }
.control.small select { font-size: 24px; }
.control select:disabled { background: #eeeff1; opacity: 1; }
.chevron { grid-area: 1 / 1; justify-self: end; margin-right: 18px; pointer-events: none; fill: none; stroke: #585c64; stroke-width: 2; }
.small .chevron { margin-right: 20px; }
select:disabled + .chevron { margin-right: 18px; stroke: #b9bdc3; }

.sources { position: relative; display: grid; grid-template-columns: 1fr 76px 1fr; gap: 16px 0; align-items: center; }
.col-head { position: relative; font-size: 24px; line-height: 34px; font-weight: 500; }
.link { justify-self: center; }
.redaction {
  position: absolute;
  top: 62px;
  left: 2px;
  width: 356px;
  height: 180px;
  display: flex;
  flex-direction: column;
  gap: 40px;
  padding: 6px 12px;
  background: linear-gradient(90deg, rgba(250, 250, 251, .5), transparent 30px), #eff0f2;
  overflow: hidden;
}
.smear { height: 30px; background: #d3d4d8; filter: blur(9px); }
.long { width: 210px; }
.mid { width: 166px; }
.short { width: 112px; }

.badge {
  position: absolute;
  display: grid;
  place-items: center;
  width: 42px;
  height: 42px;
  border-radius: 50%;
  background: #ec3323;
  color: #fff;
  font: 500 24px/24px Inter, sans-serif;
}
.badge-side { left: -46px; top: 6px; }
.badge-label { left: -42px; top: 12px; }
.badge-head { left: 142px; top: -8px; }

.drawer-foot {
  display: flex;
  justify-content: flex-end;
  padding: 50px 48px 46px;
  box-shadow: 0 -1px 4px rgba(0, 0, 0, .1);
}
.save { width: 160px; height: 64px; border-radius: 6px; background: #4070f8; color: #fff; font-size: 28px; }
```
